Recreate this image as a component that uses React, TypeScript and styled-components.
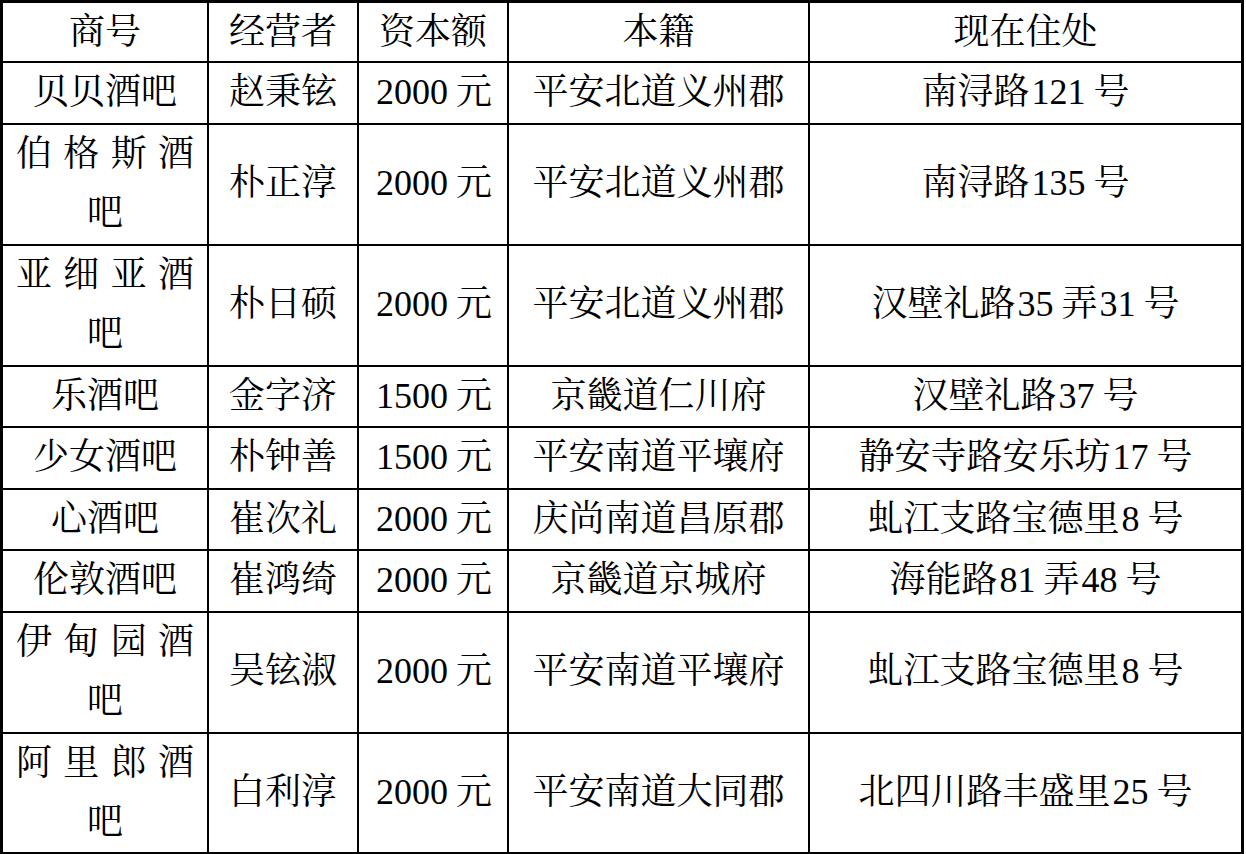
import React from "react";
import styled, { createGlobalStyle } from "styled-components";

const GlobalStyle = createGlobalStyle`
  html, body {
    margin: 0;
    padding: 0;
    background: #ffffff;
  }
  body {
    font-family: "Liberation Serif", "Noto Serif CJK SC", "Noto Sans CJK SC", serif;
    color: #000000;
  }
`;

const Table = styled.table`
  table-layout: fixed;
  border-collapse: separate;
  border-spacing: 0;
  width: 1244px;
  border-left: 3px solid #000;
  border-top: 3px solid #000;
  font-family: "Liberation Serif", "Noto Serif CJK SC", "Noto Sans CJK SC", serif;
  font-size: 36px;
  color: #000;
  tr:last-child td {
    border-bottom-width: 3px;
    line-height: 59px;
  }
`;

const Col = styled.col<{ $w: number }>`
  width: ${(p) => p.$w}px;
`;

const Cell = styled.td<{ $last?: boolean; $head?: boolean }>`
  box-sizing: border-box;
  padding: 0;
  border-right: ${(p) => (p.$last ? 3 : 2)}px solid #000;
  border-bottom: 2px solid #000;
  text-align: center;
  vertical-align: middle;
  line-height: ${(p) => (p.$head ? 58 : 59.5)}px;
  white-space: nowrap;
  font-weight: normal;
`;

const NameCell = styled(Cell)`
  padding: 0 13px;
  white-space: normal;
  text-align: justify;
  text-align-last: center;
`;

const Num = styled.span`
  margin-left: 2px;
  margin-right: 8px;
`;

type Part = string | { n: string };

type Row = {
  name: string;
  owner: string;
  capital: Part[];
  origin: string;
  address: Part[];
};

const n = (s: string) => ({ n: s });

const rows: Row[] = [
  { name: "贝贝酒吧", owner: "赵秉铉", capital: [n("2000"), "元"], origin: "平安北道义州郡", address: ["南浔路", n("121"), "号"] },
  { name: "伯格斯酒吧", owner: "朴正淳", capital: [n("2000"), "元"], origin: "平安北道义州郡", address: ["南浔路", n("135"), "号"] },
  { name: "亚细亚酒吧", owner: "朴日硕", capital: [n("2000"), "元"], origin: "平安北道义州郡", address: ["汉壁礼路", n("35"), "弄", n("31"), "号"] },
  { name: "乐酒吧", owner: "金字济", capital: [n("1500"), "元"], origin: "京畿道仁川府", address: ["汉壁礼路", n("37"), "号"] },
  { name: "少女酒吧", owner: "朴钟善", capital: [n("1500"), "元"], origin: "平安南道平壤府", address: ["静安寺路安乐坊", n("17"), "号"] },
  { name: "心酒吧", owner: "崔次礼", capital: [n("2000"), "元"], origin: "庆尚南道昌原郡", address: ["虬江支路宝德里", n("8"), "号"] },
  { name: "伦敦酒吧", owner: "崔鸿绮", capital: [n("2000"), "元"], origin: "京畿道京城府", address: ["海能路", n("81"), "弄", n("48"), "号"] },
  { name: "伊甸园酒吧", owner: "吴铉淑", capital: [n("2000"), "元"], origin: "平安南道平壤府", address: ["虬江支路宝德里", n("8"), "号"] },
  { name: "阿里郎酒吧", owner: "白利淳", capital: [n("2000"), "元"], origin: "平安南道大同郡", address: ["北四川路丰盛里", n("25"), "号"] },
];

const renderParts = (parts: Part[]) =>
  parts.map((p, i) =>
    typeof p === "string" ? (
      <React.Fragment key={i}>{p}</React.Fragment>
    ) : (
      <Num key={i}>{p.n}</Num>
    )
  );

export default function App() {
  return (
    <>
      <GlobalStyle />
      <Table>
        <colgroup>
          <Col $w={206} />
          <Col $w={150} />
          <Col $w={150} />
          <Col $w={301} />
          <Col $w={434} />
        </colgroup>
        <tbody>
          <tr>
            <Cell as="th" $head>商号</Cell>
            <Cell as="th" $head>经营者</Cell>
            <Cell as="th" $head>资本额</Cell>
            <Cell as="th" $head>本籍</Cell>
            <Cell as="th" $head $last>现在住处</Cell>
          </tr>
          {rows.map((r) => (
            <tr key={r.name}>
              <NameCell>{r.name}</NameCell>
              <Cell>{r.owner}</Cell>
              <Cell>{renderParts(r.capital)}</Cell>
              <Cell>{r.origin}</Cell>
              <Cell $last>{renderParts(r.address)}</Cell>
            </tr>
          ))}
        </tbody>
      </Table>
    </>
  );
}
